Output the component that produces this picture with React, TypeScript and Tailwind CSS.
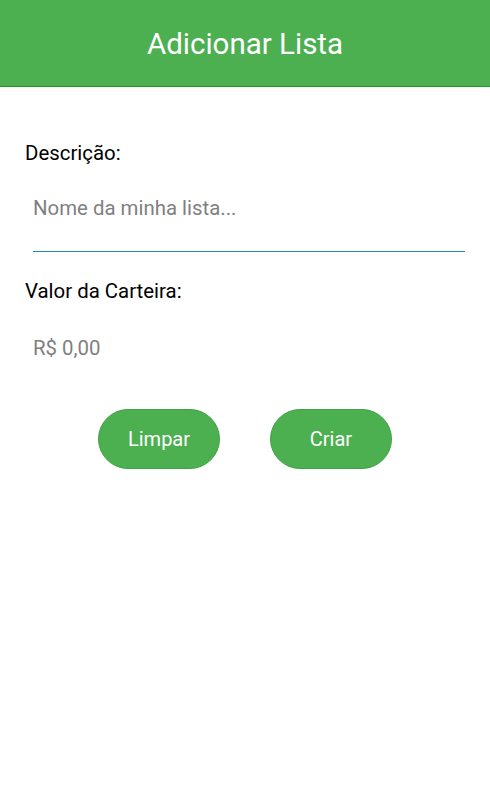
export default function App() {
  return (
    <div className="min-h-[800px] bg-white font-['Roboto',_sans-serif]">
      <header className="flex h-[87px] items-center justify-center border-b border-[#1f9e1f] bg-[#4caf50]">
        <h1 className="mt-[3px] text-[29.5px] text-white">Adicionar Lista</h1>
      </header>

      <div className="px-[25px] pt-[54px]">
        <label className="block text-[20.4px] leading-[24px] text-black">Descrição:</label>
        <div className="ml-2 mt-[31px] border-b border-[#1e88c8] pb-[29px]">
          <input
            className="w-full text-[20.4px] leading-[24px] text-black outline-none placeholder:text-[#7f7f7f]"
            placeholder="Nome da minha lista..."
          />
        </div>

        <label className="mt-[27px] block text-[20.4px] leading-[24px] text-black">
          Valor da Carteira:
        </label>
        <input
          className="ml-2 mt-[33px] w-[200px] text-[20.4px] leading-[24px] text-black outline-none placeholder:text-[#7f7f7f]"
          placeholder="R$ 0,00"
        />

        <div className="mt-[47px] flex justify-center gap-[50px]">
          <button className="h-[60px] w-[122px] rounded-full border border-[#3fa244] bg-[#4caf50] text-[20px] text-white">
            Limpar
          </button>
          <button className="h-[60px] w-[122px] rounded-full border border-[#3fa244] bg-[#4caf50] text-[20px] text-white">
            Criar
          </button>
        </div>
      </div>
    </div>
  )
}
